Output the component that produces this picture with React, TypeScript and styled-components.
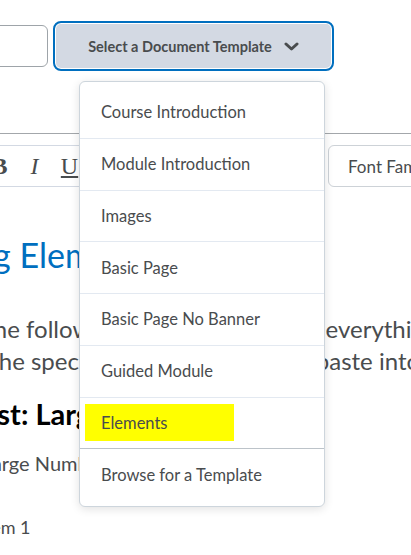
import React from "react";
import styled, { createGlobalStyle } from "styled-components";

const Global = createGlobalStyle`
  html, body { margin: 0; padding: 0; background: #fff; }
  body { font-family: Lato, "Noto Sans", sans-serif; color: #494c4e; }
  * { box-sizing: border-box; }
`;

const Page = styled.div`
  position: relative;
  display: flex;
  flex-direction: column;
  width: 411px;
  height: 555px;
  overflow: hidden;
  background: #fff;
`;

const TopBar = styled.div`
  display: flex;
  align-items: center;
  gap: 5px;
  padding-top: 21px;
  margin-left: -112px;
`;

const TitleInput = styled.div`
  width: 160px;
  height: 42px;
  border: 1px solid #9ea4a9;
  border-radius: 6px;
  background: #fff;
`;

const TemplateButton = styled.button`
  display: flex;
  align-items: center;
  justify-content: center;
  gap: 12px;
  width: 281px;
  height: 50px;
  padding: 0;
  border: 2px solid #006fbf;
  border-radius: 8px;
  background: #d3d9e3;
  box-shadow: inset 0 0 0 1px #fff;
  font-family: Lato, sans-serif;
  font-weight: 700;
  font-size: 14.5px;
  color: #494c4e;
`;

const Toolbar = styled.div`
  display: flex;
  align-items: center;
  gap: 12px;
  margin-top: 62px;
  border-top: 1px solid #a3a7ab;
  padding-top: 11px;
  margin-left: -19px;
`;

const ToolGroup = styled.div`
  display: flex;
  height: 42px;
  border: 1px solid #d3d9e3;
  border-radius: 6px;
`;

const ToolButton = styled.span<{ $italic?: boolean; $bold?: boolean; $underline?: boolean }>`
  display: flex;
  align-items: center;
  justify-content: center;
  width: 35px;
  font-family: "Liberation Serif", serif;
  font-size: 24px;
  color: #494c4e;
  font-style: ${(p) => (p.$italic ? "italic" : "normal")};
  font-weight: ${(p) => (p.$bold ? 700 : 400)};
  text-decoration: ${(p) => (p.$underline ? "underline" : "none")};
`;

const FontSelect = styled.div`
  display: flex;
  align-items: center;
  margin-left: 4px;
  width: 160px;
  height: 42px;
  padding-left: 19px;
  border: 1px solid #cdd2d7;
  border-radius: 6px;
  font-size: 17px;
  color: #494c4e;
  white-space: nowrap;
`;

const Content = styled.div`
  display: flex;
  flex-direction: column;
  align-items: flex-start;
  margin-left: -73px;
  white-space: nowrap;
`;

const Heading = styled.h1`
  margin: 48px 0 0;
  font-size: 34px;
  line-height: 40px;
  font-weight: 400;
  color: #006fbf;
`;

const Paragraph = styled.p<{ $shift: number }>`
  margin: 38px 0 0 ${(p) => -p.$shift}px;
  font-size: 24px;
  line-height: 32px;
  color: #494c4e;
`;

const Line = styled.span`
  display: block;
`;

const SubHeading = styled.h2<{ $shift: number }>`
  margin: 21px 0 0 ${(p) => -p.$shift}px;
  font-size: 29px;
  line-height: 32px;
  font-weight: 700;
  color: #000;
`;

const Note = styled.p<{ $shift: number }>`
  margin: 20px 0 0 ${(p) => -p.$shift}px;
  font-size: 20px;
  line-height: 26px;
  color: #494c4e;
`;

const ItemList = styled.ol`
  margin: 38px 0 0;
  padding-left: 53px;
  list-style: none;
  font-size: 18px;
  line-height: 26px;
  color: #494c4e;
`;

const Menu = styled.ul`
  position: absolute;
  top: 81px;
  left: 79px;
  width: 246px;
  margin: 0;
  padding: 5px 0 5px;
  list-style: none;
  background: #fff;
  border: 1px solid #cdd5dc;
  border-radius: 6px;
  box-shadow: 0 2px 10px rgba(0, 0, 0, 0.12);
`;

const MenuItem = styled.li<{ $last?: boolean; $strong?: boolean }>`
  display: flex;
  align-items: center;
  height: 51.75px;
  padding-left: 21px;
  font-size: 16.5px;
  color: #494c4e;
  border-bottom: ${(p) => (p.$last ? "none" : `1px solid ${p.$strong ? "#bcc3c9" : "#e3e9f1"}`)};
`;

const Highlight = styled.span`
  display: flex;
  align-items: center;
  width: 149px;
  height: 37px;
  margin-left: -16px;
  padding-left: 16px;
  background: #ffff00;
`;

const Chevron = () => (
  <svg width="15" height="9" viewBox="0 0 15 9">
    <path d="M2 2 L7.5 7 L13 2" fill="none" stroke="#494c4e" strokeWidth="3" strokeLinecap="round" strokeLinejoin="round" />
  </svg>
);

const items = [
  "Course Introduction",
  "Module Introduction",
  "Images",
  "Basic Page",
  "Basic Page No Banner",
  "Guided Module",
  "Elements",
  "Browse for a Template",
];

export default function App() {
  return (
    <>
      <Global />
      <Page>
        <TopBar>
          <TitleInput />
          <TemplateButton>
            <span>Select a Document Template</span>
            <Chevron />
          </TemplateButton>
        </TopBar>
        <Toolbar>
          <ToolGroup>
            <ToolButton $bold>B</ToolButton>
            <ToolButton $italic>I</ToolButton>
            <ToolButton $underline>U</ToolButton>
            <ToolButton>S</ToolButton>
            <ToolButton>x</ToolButton>
            <ToolButton>A</ToolButton>
          </ToolGroup>
          <ToolGroup>
            <ToolButton>≡</ToolButton>
            <ToolButton>≡</ToolButton>
            <ToolButton>≡</ToolButton>
          </ToolGroup>
          <FontSelect>Font Family</FontSelect>
        </Toolbar>
        <Content>
          <Heading>Using Elements</Heading>
          <Paragraph $shift={7}>
            <Line>Using the following elements aids, but everything</Line>
            <Line>Select the specific element you need, paste into</Line>
          </Paragraph>
          <SubHeading $shift={14}>Icon List: Large Numbers</SubHeading>
          <Note $shift={18}>Format: Large Numbers</Note>
          <ItemList>
            <li>Item 1</li>
          </ItemList>
        </Content>
        <Menu>
          {items.map((label, i) => (
            <MenuItem key={label} $last={i === items.length - 1} $strong={i === items.length - 2}>
              {label === "Elements" ? <Highlight>{label}</Highlight> : label}
            </MenuItem>
          ))}
        </Menu>
      </Page>
    </>
  );
}
